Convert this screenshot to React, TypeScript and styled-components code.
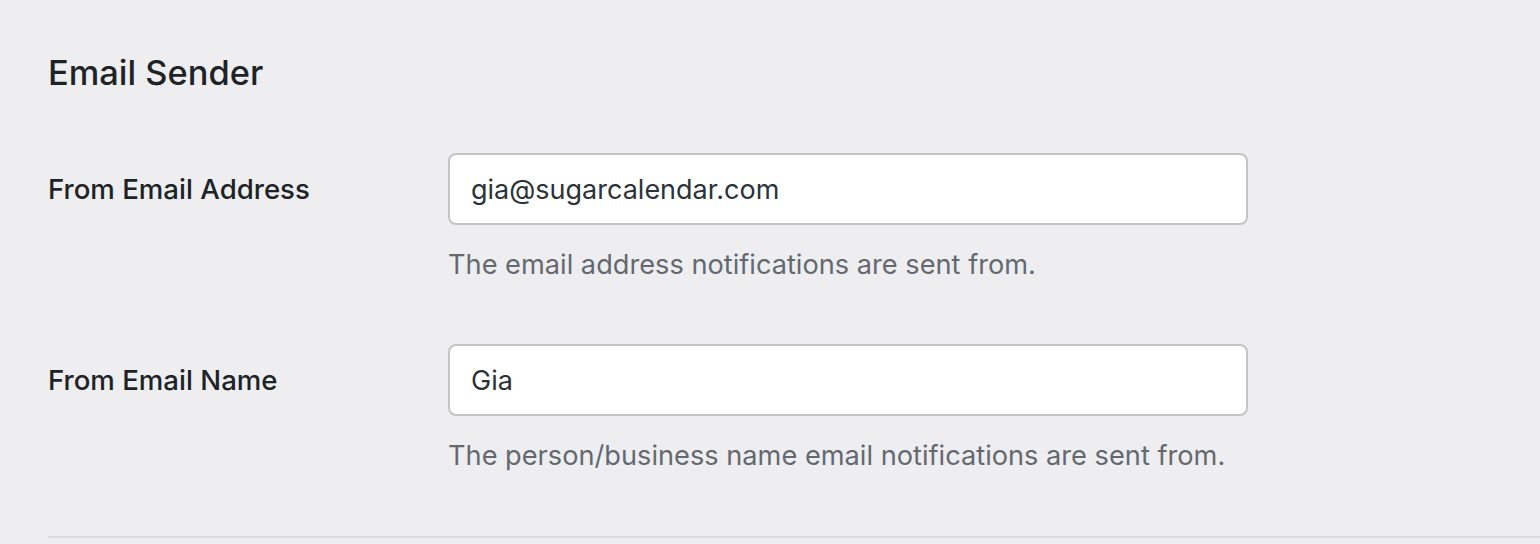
import styled, { createGlobalStyle } from "styled-components";

const GlobalStyle = createGlobalStyle`
  html, body {
    margin: 0;
    padding: 0;
    background: #eeeef0;
  }
  body {
    font-family: Inter, "Noto Sans", "Liberation Sans", sans-serif;
    -webkit-font-smoothing: antialiased;
  }
`;

type Field = {
  label: string;
  value: string;
  help: string;
};

const fields: Field[] = [
  {
    label: "From Email Address",
    value: "gia@sugarcalendar.com",
    help: "The email address notifications are sent from.",
  },
  {
    label: "From Email Name",
    value: "Gia",
    help: "The person/business name email notifications are sent from.",
  },
];

const App = () => {
  return (
    <>
      <GlobalStyle />
      <Page>
        <SectionTitle>Email Sender</SectionTitle>
        <FormTable>
          {fields.map((field) => (
            <FormRow key={field.label}>
              <LabelCell>
                <Label>{field.label}</Label>
              </LabelCell>
              <FieldCell>
                <TextInput type="text" defaultValue={field.value} />
                <Description>{field.help}</Description>
              </FieldCell>
            </FormRow>
          ))}
        </FormTable>
        <Divider />
      </Page>
    </>
  );
};

export default App;

const Page = styled.div`
  padding: 49px 0 0 48px;
  height: 544px;
  box-sizing: border-box;
  overflow: hidden;
`;

const SectionTitle = styled.h2`
  margin: 0 0 27px;
  font-size: 34.4px;
  line-height: 47px;
  font-weight: 500;
  color: #1d2327;
`;

const FormTable = styled.div`
  display: flex;
  flex-direction: column;
`;

const FormRow = styled.div`
  display: grid;
  grid-template-columns: 400px 800px;
  padding: 30px 0 29px;

  & + & {
    padding-top: 29px;
  }
`;

const LabelCell = styled.div`
  display: flex;
  align-items: center;
  height: 72px;
`;

const Label = styled.label`
  font-size: 27.6px;
  line-height: 42px;
  font-weight: 500;
  color: #1d2327;
`;

const FieldCell = styled.div`
  display: flex;
  flex-direction: column;
`;

const TextInput = styled.input`
  box-sizing: border-box;
  width: 800px;
  height: 72px;
  padding: 0 21px;
  border: 2px solid #c3c4c7;
  border-radius: 8px;
  background: #fff;
  font-family: inherit;
  font-size: 27px;
  color: #2c3338;
  outline: none;
`;

const Description = styled.p`
  margin: 19px 0 0;
  font-size: 27.2px;
  line-height: 42px;
  color: #646970;
`;

const Divider = styled.hr`
  margin: 30px 0 0;
  border: 0;
  height: 2px;
  background: #dcdcde;
`;
